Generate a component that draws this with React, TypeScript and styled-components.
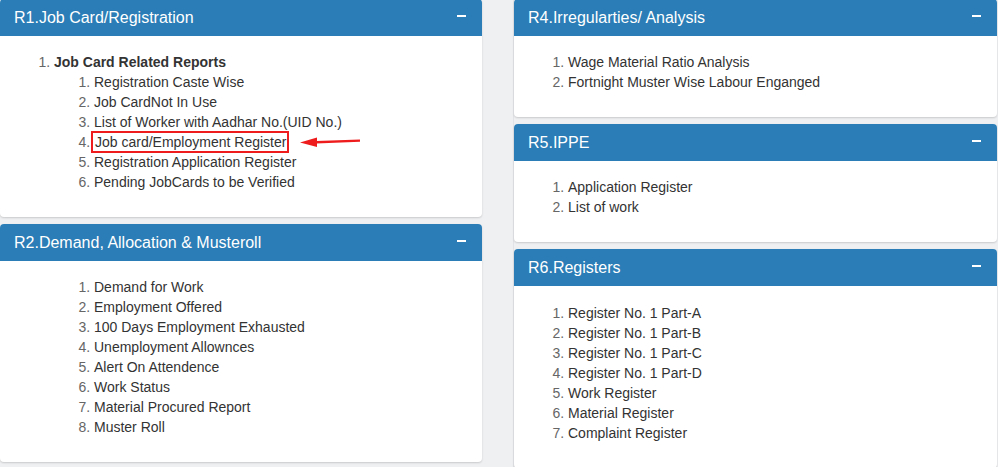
import React from 'react';
import styled, { createGlobalStyle } from 'styled-components';

const GlobalStyle = createGlobalStyle`
    body {
        margin: 0;
        background: #eff0f2;
        font-family: "Liberation Sans", Arial, sans-serif;
        font-size: 14px;
        line-height: 20px;
        color: #333;
    }
`;

const Page = styled.div`
    display: grid;
    grid-template-columns: 482px 484px;
    column-gap: 31px;
    align-items: start;
    margin-top: -1px;
    height: 468px;
    overflow: hidden;
`;

const Column = styled.div`
    display: flex;
    flex-direction: column;
    gap: 7px;
`;

const RightColumn = styled(Column)`
    border-left: 1px solid #e2e3e6;
`;

const Panel = styled.section`
    background: #fff;
    border-radius: 4px;
    box-shadow: 0 1px 2px rgba(0, 0, 0, .16);
    overflow: hidden;
`;

const PanelHeading = styled.div`
    display: flex;
    align-items: center;
    justify-content: space-between;
    height: 37px;
    padding: 0 16px 0 14px;
    background: #2a7db6;
    color: #fff;
`;

const PanelTitle = styled.h3`
    margin: 0;
    font-size: 16px;
    font-weight: normal;
    line-height: 18px;
`;

const Collapse = styled.span`
    display: block;
    width: 9px;
    height: 1.5px;
    margin-top: -3px;
    background: #fff;
`;

const PanelBody = styled.div<{ tall?: boolean }>`
    padding: ${({ tall }) => (tall ? 17 : 16)}px 15px 15px;
`;

const List = styled.ol<{ indent?: number }>`
    margin: 0 0 10px;
    padding-left: ${({ indent }) => indent || 39}px;

    li::marker {
        color: #666;
    }
`;

const SubList = styled.ol`
    margin: 0;
    padding-left: 40px;
    font-weight: normal;

    li::marker {
        color: #666;
    }
`;

const Item = styled.li`
    font-weight: normal;
`;

const ItemText = styled.span<{ bold?: boolean }>`
    font-weight: ${({ bold }) => (bold ? 'bold' : 'normal')};
    color: #333;
`;

const Highlight = styled.span`
    margin-left: -3px;
    padding: 1px 1px 1px 2px;
    border: 2px solid #ee1c1c;
`;

const Arrow = styled.svg`
    margin-left: 11px;
    vertical-align: -1px;
`;

interface SectionProps {
    title: string;
    tall?: boolean;
    children: React.ReactNode;
}

const Section = ({ title, tall, children }: SectionProps) => (
    <Panel>
        <PanelHeading>
            <PanelTitle>{title}</PanelTitle>
            <Collapse />
        </PanelHeading>
        <PanelBody tall={tall}>{children}</PanelBody>
    </Panel>
);

const SimpleList = ({ items, indent }: { items: string[]; indent?: number }) => (
    <List indent={indent}>
        {items.map(item => <Item key={item}>{item}</Item>)}
    </List>
);

const demandItems = [
    'Demand for Work',
    'Employment Offered',
    '100 Days Employment Exhausted',
    'Unemployment Allownces',
    'Alert On Attendence',
    'Work Status',
    'Material Procured Report',
    'Muster Roll',
];

const registerItems = [
    'Register No. 1 Part-A',
    'Register No. 1 Part-B',
    'Register No. 1 Part-C',
    'Register No. 1 Part-D',
    'Work Register',
    'Material Register',
    'Complaint Register',
];

const App = () => (
    <>
        <GlobalStyle />
        <Page>
            <Column>
                <Section title="R1.Job Card/Registration">
                    <List>
                        <Item>
                            <ItemText bold>Job Card Related Reports</ItemText>
                            <SubList>
                                <Item>Registration Caste Wise</Item>
                                <Item>Job CardNot In Use</Item>
                                <Item>List of Worker with Aadhar No.(UID No.)</Item>
                                <Item>
                                    <Highlight>Job card/Employment Register</Highlight>
                                    <Arrow width="62" height="12" viewBox="0 0 62 12">
                                        <line x1="16" y1="6.2" x2="60" y2="4.6" stroke="#ee1c1c" strokeWidth="2.4" />
                                        <polygon points="0,6.5 17,1.5 17,11" fill="#ee1c1c" />
                                    </Arrow>
                                </Item>
                                <Item>Registration Application Register</Item>
                                <Item>Pending JobCards to be Verified</Item>
                            </SubList>
                        </Item>
                    </List>
                </Section>
                <Section title="R2.Demand, Allocation & Musteroll">
                    <SimpleList items={demandItems} indent={79} />
                </Section>
            </Column>
            <RightColumn>
                <Section title="R4.Irregularties/ Analysis">
                    <SimpleList items={['Wage Material Ratio Analysis', 'Fortnight Muster Wise Labour Enganged']} />
                </Section>
                <Section title="R5.IPPE">
                    <SimpleList items={['Application Register', 'List of work']} />
                </Section>
                <Section title="R6.Registers" tall>
                    <SimpleList items={registerItems} />
                </Section>
            </RightColumn>
        </Page>
    </>
);

export default App;
